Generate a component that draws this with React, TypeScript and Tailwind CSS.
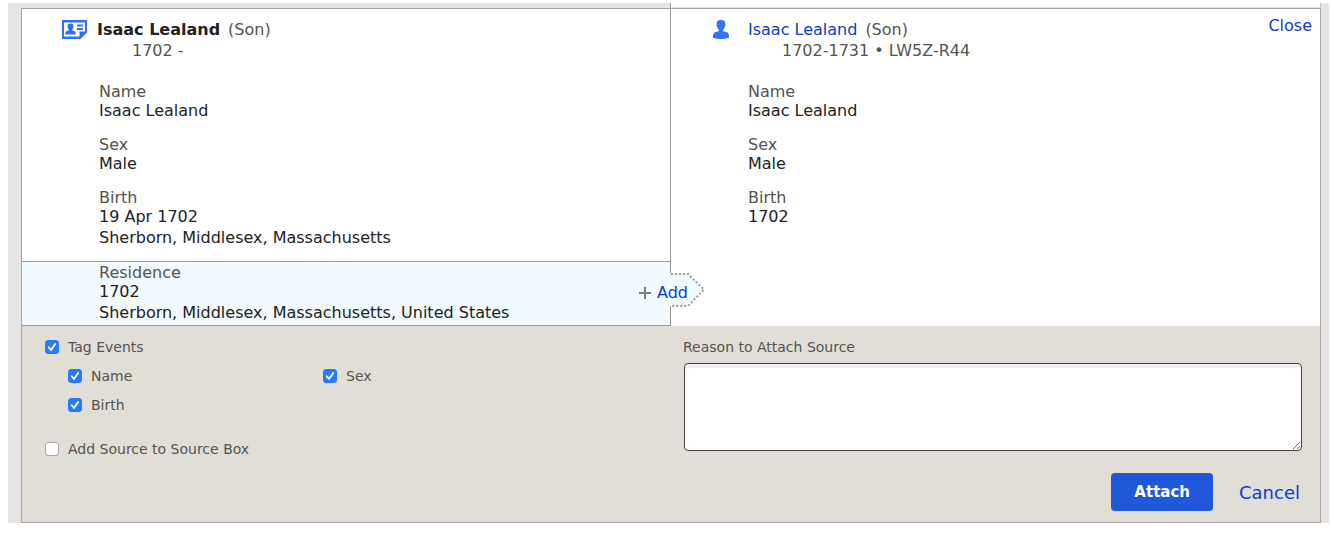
import React from "react";

const facts = {
  left: [
    { label: "Name", lines: ["Isaac Lealand"] },
    { label: "Sex", lines: ["Male"] },
    { label: "Birth", lines: ["19 Apr 1702", "Sherborn, Middlesex, Massachusetts"] },
  ],
  right: [
    { label: "Name", lines: ["Isaac Lealand"] },
    { label: "Sex", lines: ["Male"] },
    { label: "Birth", lines: ["1702"] },
  ],
};

function Fact({ label, lines }: { label: string; lines: string[] }) {
  return (
    <div>
      <dt className="leading-[19px] text-[#55534e]">{label}</dt>
      {lines.map((line, i) => (
        <dd key={line} className={i === 0 ? "leading-[19px]" : "pt-[2px] leading-[19px]"}>
          {line}
        </dd>
      ))}
    </div>
  );
}

function RecordIcon() {
  return (
    <svg width="25" height="19" viewBox="0 0 25 19" className="shrink-0" aria-hidden="true">
      <path fill="#2f6fff" fillRule="evenodd" d="M0 0H25V12.500L18.500 19H0ZM2 2.500V16.500H17.500V11.500H23V2.500Z" />
      <path fill="#2f6fff" d="M8.500 3.600c2.200 0 3.200 1 3 2.900-.1 1.200-.6 2.200-1.200 2.800v1.200l1.900.6c1.100.4 1.600 1.200 1.600 3.400H3.200c0-2.200.5-3 1.600-3.400l1.900-.6V9.300C6.100 8.700 5.600 7.700 5.500 6.500c-.2-1.900.8-2.900 3-2.900ZM15 4.500h6v2h-6ZM15 8h6v2h-6Z" />
    </svg>
  );
}

function PersonIcon() {
  return (
    <svg width="16" height="19" viewBox="0 0 16 19" className="shrink-0" aria-hidden="true">
      <path fill="#2f74ff" d="M8 0c3 0 4.400 1.200 4.200 3.400v1c.5.400.4 1.400-.3 1.900-.2 1.500-.8 2.600-1.700 3.400v1.500l3.800 1.100c1.500.5 2 2 2 5.500-2.500.8-5.200 1.200-8 1.200s-5.500-.4-8-1.200c0-3.500.5-5 2-5.500l3.800-1.100V9.700C4.900 8.900 4.300 7.800 4.100 6.300c-.7-.5-.8-1.500-.3-1.900v-1C3.600 1.200 5 0 8 0Z" />
    </svg>
  );
}

function Check({ id, label, checked = false }: { id: string; label: string; checked?: boolean }) {
  return (
    <div className="flex items-center gap-[9px]">
      <span className="relative grid h-[14px] w-[14px] place-items-center">
        <input
          id={id}
          type="checkbox"
          defaultChecked={checked}
          className="peer h-[14px] w-[14px] appearance-none rounded-[3px] border border-[#a9a7a3] bg-white checked:border-[#277bfb] checked:bg-[#277bfb]"
        />
        <svg viewBox="0 0 14 14" className="pointer-events-none absolute inset-0 hidden h-full w-full peer-checked:block" aria-hidden="true">
          <path d="M3.800 7.300 6 10 10.200 4" fill="none" stroke="white" strokeWidth="1.800" strokeLinecap="round" strokeLinejoin="round" />
        </svg>
      </span>
      <label htmlFor={id} className="leading-5">{label}</label>
    </div>
  );
}

export default function App() {
  return (
    <main className="px-2 pt-[3px] pr-[3px] font-['DejaVu_Sans',Verdana,sans-serif] text-[16px] text-[#222]">
      <div className="bg-[#e6e5e3] pr-2 pl-[13px]">
        <div className="grid h-[5px] grid-cols-2">
          <div className="border-r border-[#9d9791]" />
          <div className="border-r border-b border-r-[#c2bfb7] border-b-[#e6e5e3] bg-white" />
        </div>
        <div className="border border-[#a9a69f]">
          <div className="grid grid-cols-2 bg-white">
            <section className="flex flex-col border-r border-[#9d9791]">
              <header className="flex items-start gap-[10px] pt-[11px] pl-10">
                <RecordIcon />
                <div>
                  <h2 className="flex gap-2 leading-[20px] text-[#55534e]">
                    <strong className="text-[#222]">Isaac Lealand</strong>
                    <span>(Son)</span>
                  </h2>
                  <p className="pl-[35px] leading-[22px] text-[#55534e]">1702 -</p>
                </div>
              </header>
              <dl className="flex flex-col gap-[15px] pt-5 pb-[14px] pl-[77px]">
                {facts.left.map((f) => <Fact key={f.label} {...f} />)}
              </dl>
              <div className="relative mt-auto border-y border-[#9d9791] bg-[#f0faff] pt-px pb-[3px] pl-[77px]">
                <dl><Fact label="Residence" lines={["1702", "Sherborn, Middlesex, Massachusetts, United States"]} /></dl>
                <div className="absolute top-[10px] -right-[36px]">
                  <svg width="37" height="36" viewBox="0 0 37 36" aria-hidden="true">
                    <path d="M0 1H19L35 17.500 19 34H0Z" fill="#f0faff" />
                    <path d="M2 2H19L35 17.500 19 34H2" fill="none" stroke="#a09b94" strokeWidth="2" strokeDasharray="2 2" />
                  </svg>
                </div>
                <button type="button" className="absolute top-[21px] -right-[18px] flex items-center gap-[6px] leading-5 text-[#0d3bd0]">
                  <svg width="12" height="12" viewBox="0 0 12 12" aria-hidden="true"><path d="M6 0V12M0 6H12" stroke="#837c74" strokeWidth="2" /></svg>
                  Add
                </button>
              </div>
            </section>
            <section>
              <header className="flex items-start pt-[11px] pr-2 pl-[42px]">
                <PersonIcon />
                <div className="pl-[19px]">
                  <h2 className="flex gap-2 leading-[20px] text-[#55534e]">
                    <a href="#person" className="text-[#0d3bd0]">Isaac Lealand</a>
                    <span>(Son)</span>
                  </h2>
                  <p className="pl-[34px] leading-[22px] text-[#55534e]">1702-1731 • LW5Z-R44</p>
                </div>
                <button type="button" className="-mt-1 ml-auto leading-5 text-[#0d3bd0]">Close</button>
              </header>
              <dl className="flex flex-col gap-[15px] pt-5 pl-[77px]">
                {facts.right.map((f) => <Fact key={f.label} {...f} />)}
              </dl>
            </section>
          </div>
          <form className="grid grid-cols-2 bg-[#e1ded7] pt-[11px] pb-[11px] text-[14px] text-[#55534e]" onSubmit={(e) => e.preventDefault()}>
            <fieldset className="pl-[23px]">
              <Check id="tag" label="Tag Events" checked />
              <div className="grid grid-cols-[255px_1fr] gap-y-[9px] pt-[9px] pl-[23px]">
                <Check id="name" label="Name" checked />
                <Check id="sex" label="Sex" checked />
                <Check id="birth" label="Birth" checked />
              </div>
              <div className="pt-6"><Check id="box" label="Add Source to Source Box" /></div>
            </fieldset>
            <div className="flex flex-col pr-[18px] pl-3">
              <label htmlFor="reason" className="leading-5">Reason to Attach Source</label>
              <textarea id="reason" className="mt-[6px] ml-px h-[88px] rounded-[4px] border border-[#444340] bg-white shadow-[inset_0_4px_0_#efefef]" />
              <div className="flex items-center justify-end gap-[26px] pt-[22px] pr-[2px] text-[18px]">
                <button type="submit" className="h-[38px] rounded-[4px] bg-[#2157db] px-[23px] text-[15px] font-bold text-white">Attach</button>
                <button type="button" className="text-[#0d3bd0]">Cancel</button>
              </div>
            </div>
          </form>
        </div>
      </div>
    </main>
  );
}
